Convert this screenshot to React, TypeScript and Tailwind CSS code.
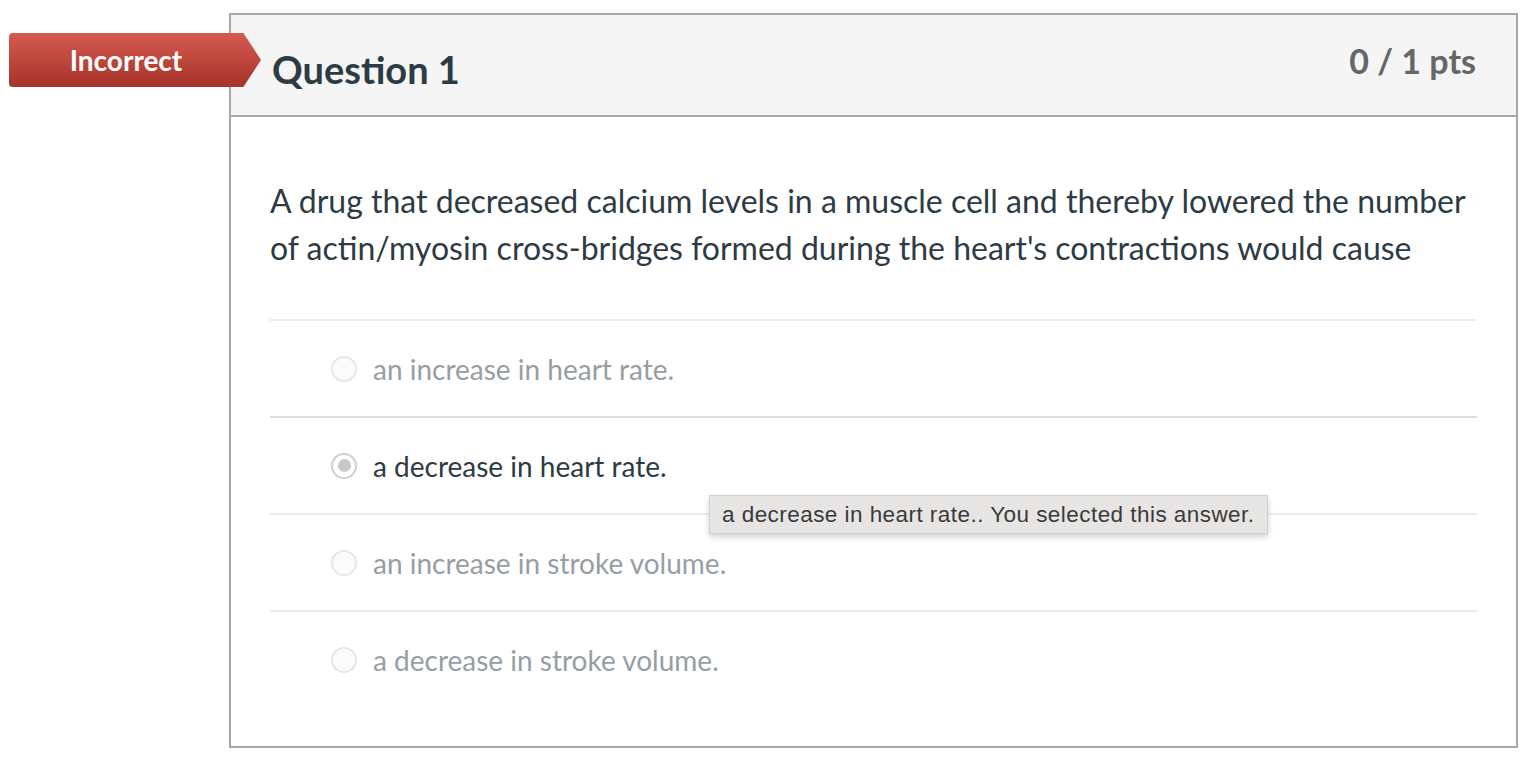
const answers = [
  { text: "an increase in heart rate.", selected: false, line: "border-[#ebebeb]" },
  { text: "a decrease in heart rate.", selected: true, line: "border-[#dcdcdc]" },
  { text: "an increase in stroke volume.", selected: false, line: "border-[#ebebeb]" },
  { text: "a decrease in stroke volume.", selected: false, line: "border-[#ebebeb]" },
];

function Radio({ checked }: { checked: boolean }) {
  if (checked) {
    return (
      <span className="flex h-[26px] w-[26px] shrink-0 items-center justify-center rounded-full border-2 border-[#d0d0d0] bg-white">
        <span className="h-[13px] w-[13px] rounded-full bg-[#c8c8c8]" />
      </span>
    );
  }
  return <span className="h-[26px] w-[26px] shrink-0 rounded-full border-2 border-[#e6e6e6] bg-[#fbfbfb]" />;
}

export default function App() {
  return (
    <div className="relative min-h-[762px] bg-white pt-[13px] font-['Lato',sans-serif]">
      <div className="ml-[229px] h-[735px] w-[1289px] border-2 border-[#a8a8a8] bg-white">
        <div className="flex h-[102px] justify-between border-b-2 border-[#a8a8a8] bg-[#f5f5f5] pl-[41px] pr-[40px]">
          <h2 className="pt-[32px] text-[38px] font-bold leading-[1.2] text-[#2d3b45]">Question 1</h2>
          <div className="pt-[26px] text-[34px] font-bold leading-[1.2] text-[#666666]">0 / 1 pts</div>
        </div>
        <div className="pl-[39px] pr-[39px] pt-[60px]">
          <p className="text-[32px] leading-[47px] text-[#2d3b45]">
            A drug that decreased calcium levels in a muscle cell and thereby lowered the number of actin/myosin
            cross-bridges formed during the heart's contractions would cause
          </p>
          <div className="mt-[48px]">
            {answers.map((a) => (
              <div key={a.text} className={`flex h-[97px] items-center gap-[16px] border-t-2 pl-[61px] ${a.line}`}>
                <Radio checked={a.selected} />
                <span className={`text-[28px] ${a.selected ? "text-[#2d3b45]" : "text-[#969ea5]"}`}>{a.text}</span>
              </div>
            ))}
          </div>
        </div>
      </div>

      <div className="absolute left-[9px] top-[33px] h-[54px] w-[252px] rounded-l-[4px] bg-gradient-to-b from-[#d75a50] to-[#a5332a] shadow-[0_1px_2px_rgba(0,0,0,0.3)] [clip-path:polygon(0_0,93%_0,100%_50%,93%_100%,0_100%)]">
        <div className="flex h-full w-[234px] items-center justify-center text-[28px] font-bold text-white">
          Incorrect
        </div>
      </div>

      <div className="absolute left-[709px] top-[495px] flex h-[39px] w-[559px] items-center whitespace-nowrap border border-[#cfcfcf] bg-[#e6e5e3] px-[12px] font-['Liberation_Sans',Arial,sans-serif] text-[22.5px] tracking-[0.45px] text-[#3a3a3a] shadow-[0_3px_6px_rgba(0,0,0,0.18)]">
        a decrease in heart rate.. You selected this answer.
      </div>
    </div>
  );
}
